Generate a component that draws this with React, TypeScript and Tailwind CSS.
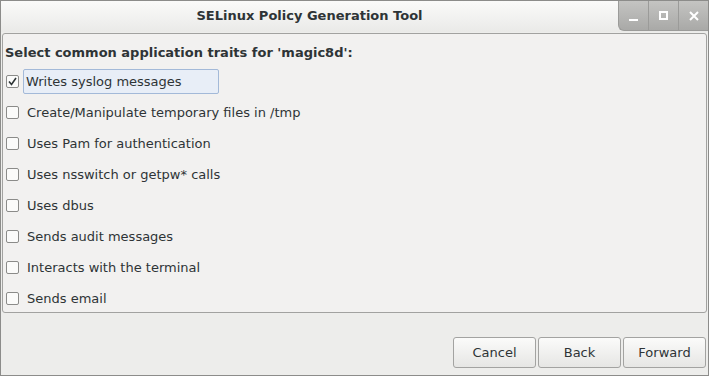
import { useState } from "react";

const traits = [
  "Writes syslog messages",
  "Create/Manipulate temporary files in /tmp",
  "Uses Pam for authentication",
  "Uses nsswitch or getpw* calls",
  "Uses dbus",
  "Sends audit messages",
  "Interacts with the terminal",
  "Sends email",
];

const Check = ({ on }: { on: boolean }) => (
  <span className="flex h-[13px] w-[13px] shrink-0 items-center justify-center rounded-[2px] border border-[#8b8b89] bg-[#fbfbfa]">
    {on && (
      <svg width="9" height="9" viewBox="0 0 9 9">
        <path d="M1 4.5 L3.5 7.5 L8 1" fill="none" stroke="#2e3436" strokeWidth="1.6" />
      </svg>
    )}
  </span>
);

const TitleButton = ({ children, first }: { children: React.ReactNode; first?: boolean }) => (
  <div
    className={`flex h-[30px] w-[30px] items-center justify-center border-l border-[#9b9b99] bg-gradient-to-b from-[#c4c4c2] to-[#a9a9a7] ${
      first ? "rounded-bl-[6px] border-b" : "border-b"
    }`}
  >
    {children}
  </div>
);

export default function App() {
  const [checked, setChecked] = useState([true, false, false, false, false, false, false, false]);

  return (
    <div className="flex h-[376px] w-[709px] flex-col overflow-hidden border border-[#8c8c8a] bg-[#ededeb] font-['DejaVu_Sans',sans-serif] text-[13px] text-[#2e3436]">
      {/* TITLEBAR */}
      <div className="flex h-[31px] shrink-0 bg-gradient-to-b from-[#fafaf9] to-[#eaeae8]">
        <div className="flex flex-1 items-center justify-center">
          <span className="-mt-[1px] font-bold">SELinux Policy Generation Tool</span>
        </div>
        <div className="flex items-start">
          <TitleButton first>
            <span className="mt-[8px] h-[2px] w-[9px] bg-white" />
          </TitleButton>
          <TitleButton>
            <span className="h-[9px] w-[9px] border-2 border-white" />
          </TitleButton>
          <TitleButton>
            <svg width="10" height="10" viewBox="0 0 10 10">
              <path d="M1 1 L9 9 M9 1 L1 9" stroke="white" strokeWidth="2" />
            </svg>
          </TitleButton>
        </div>
      </div>

      {/* PANEL */}
      <div className="mx-[1px] mt-[1px] flex h-[280px] flex-col rounded-[3px] border border-[#a2a2a0] bg-[#f2f1f0] pl-[1px] pt-[11px]">
        <div className="pl-[1px] font-bold leading-[16px]">Select common application traits for 'magic8d':</div>
        <div className="mt-[5px] flex flex-col">
          {traits.map((t, i) => (
            <label
              key={t}
              className="flex h-[31px] cursor-default items-center"
              onClick={() => setChecked(checked.map((c, j) => (j === i ? !c : c)))}
            >
              <span className="ml-[2px]">
                <Check on={checked[i]} />
              </span>
              {i === 0 ? (
                <span className="ml-[4px] flex h-[25px] w-[196px] items-center rounded-[2px] border border-[#a3b9d8] bg-[#e8eef7] pl-[2px]">
                  {t}
                </span>
              ) : (
                <span className="ml-[8px]">{t}</span>
              )}
            </label>
          ))}
        </div>
      </div>

      {/* BUTTONS */}
      <div className="mr-[2px] mt-[24px] flex justify-end gap-[2px]">
        {["Cancel", "Back", "Forward"].map((b) => (
          <button
            key={b}
            className="h-[31px] w-[83px] rounded-[3px] border border-[#a3a3a1] bg-gradient-to-b from-[#fbfbfa] to-[#e6e6e4] text-[#2e3436]"
          >
            {b}
          </button>
        ))}
      </div>
    </div>
  );
}
